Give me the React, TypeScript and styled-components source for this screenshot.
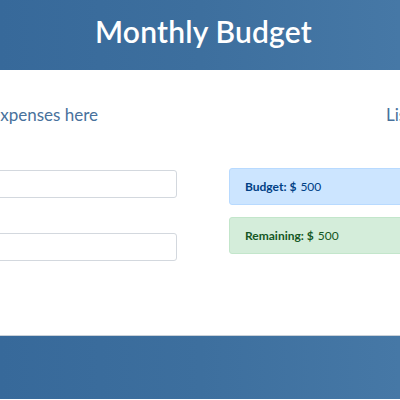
import React from "react";
import styled, { createGlobalStyle } from "styled-components";

const Global = createGlobalStyle`
  html, body { margin: 0; padding: 0; background: #fff; }
  body { width: 400px; height: 400px; overflow: hidden; font-family: "Open Sans", "DejaVu Sans", sans-serif; }
`;

const Header = styled.header`
  height: 70px;
  background: linear-gradient(90deg, #37699a 0%, #3d6f9e 50%, #4678a6 100%);
  display: flex;
  align-items: center;
  justify-content: center;
  padding-left: 7px;
  box-sizing: border-box;
`;

const Title = styled.h1`
  margin: 0;
  color: #fff;
  font-family: Lato, "Open Sans", sans-serif;
  font-weight: 600;
  font-size: 30px;
  letter-spacing: 0.2px;
  line-height: 1;
  padding-bottom: 8px;
`;

const Main = styled.main`
  height: 266px;
  box-sizing: border-box;
  border-bottom: 1px solid #c9d1d9;
  overflow: hidden;
`;

const Grid = styled.div`
  display: grid;
  grid-template-columns: 277px 300px;
  column-gap: 52px;
  margin-left: -100px;
  padding-top: 34px;
`;

const Heading = styled.h2<{ $align: "left" | "right"; $pad: number }>`
  margin: 0;
  height: 22px;
  font-family: Lato, "Open Sans", sans-serif;
  font-weight: 400;
  font-size: 17px;
  line-height: 22px;
  color: #48719c;
  white-space: nowrap;
  text-align: ${(p) => p.$align};
  ${(p) => (p.$align === "right" ? `padding-right: ${p.$pad}px;` : `padding-left: ${p.$pad}px;`)}
`;

const Column = styled.div<{ $gap: number; $top: number }>`
  display: flex;
  flex-direction: column;
  gap: ${(p) => p.$gap}px;
  margin-top: ${(p) => p.$top}px;
`;

const Input = styled.input`
  box-sizing: border-box;
  width: 100%;
  height: 28px;
  border: 1px solid #d3d8de;
  border-radius: 3px;
  background: #fff;
  padding: 0 10px;
  font-size: 13px;
`;

const Alert = styled.div<{ $kind: "info" | "success" }>`
  box-sizing: border-box;
  height: 37px;
  border-radius: 3px;
  padding: 0 15px;
  display: flex;
  align-items: center;
  font-family: Lato, "Open Sans", sans-serif;
  font-size: 12px;
  background: ${(p) => (p.$kind === "info" ? "#cce5ff" : "#d4edda")};
  border: 1px solid ${(p) => (p.$kind === "info" ? "#b8daff" : "#c3e6cb")};
  color: ${(p) => (p.$kind === "info" ? "#004085" : "#155724")};
  strong { font-weight: 700; margin-right: 4px; }
`;

const Footer = styled.footer`
  height: 63px;
  background: linear-gradient(90deg, #37699a 0%, #3d6f9e 50%, #4678a6 100%);
`;

export default function App() {
  return (
    <>
      <Global />
      <Header>
        <Title>Monthly Budget</Title>
      </Header>
      <Main>
        <Grid>
          <Heading $align="right" $pad={79}>Enter your expenses here</Heading>
          <Heading $align="left" $pad={157}>List of expenses</Heading>
          <Column $gap={35} $top={44}>
            <Input aria-label="Budget" />
            <Input aria-label="Expense" />
          </Column>
          <Column $gap={12} $top={42}>
            <Alert $kind="info">
              <strong>Budget: $</strong>500
            </Alert>
            <Alert $kind="success">
              <strong>Remaining: $</strong>500
            </Alert>
          </Column>
        </Grid>
      </Main>
      <Footer />
    </>
  );
}
